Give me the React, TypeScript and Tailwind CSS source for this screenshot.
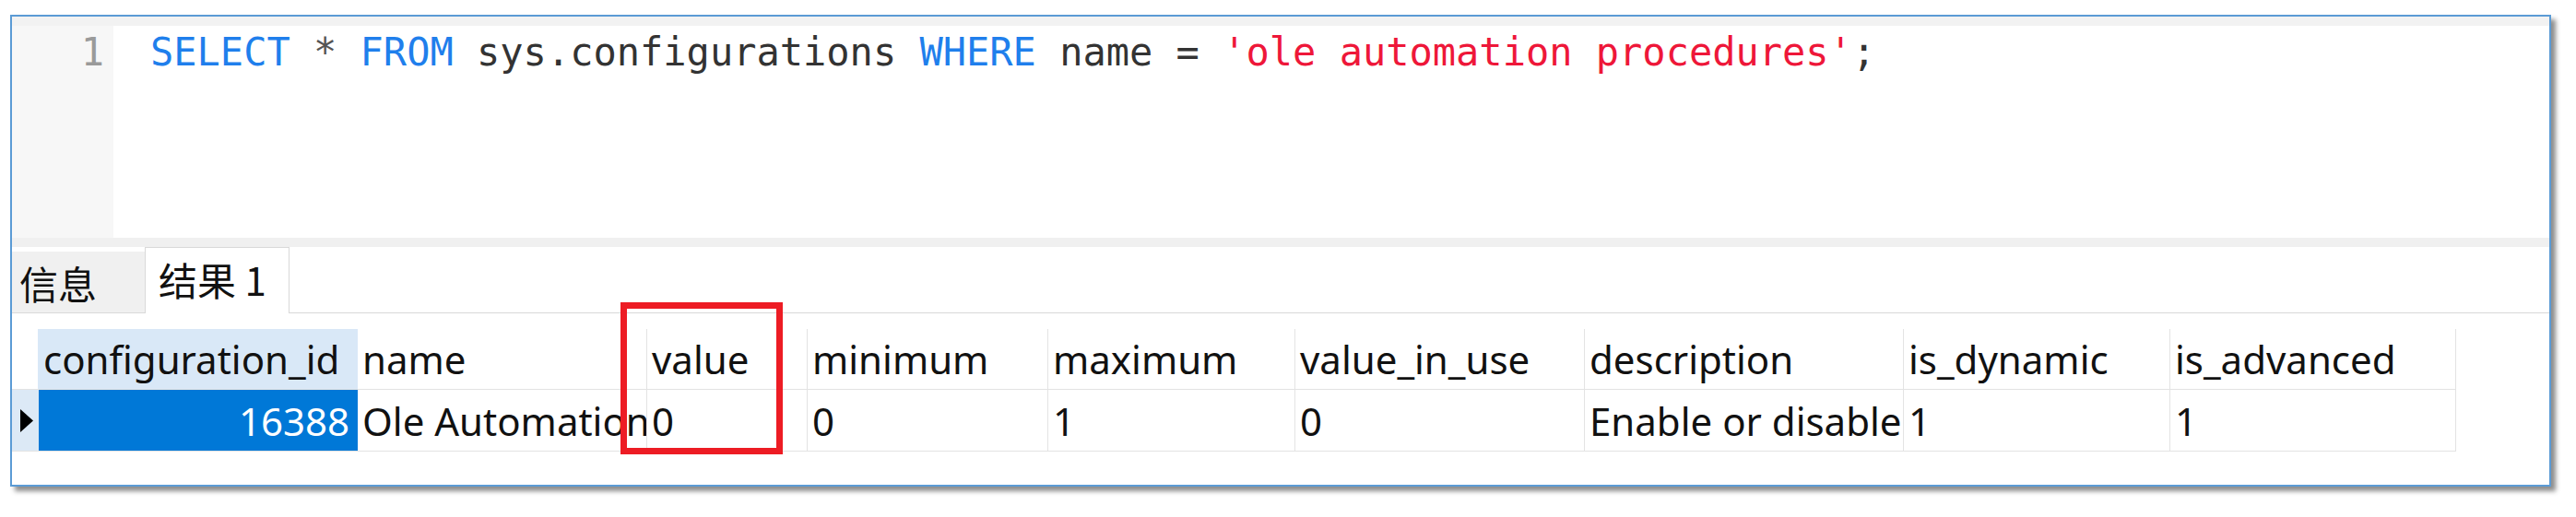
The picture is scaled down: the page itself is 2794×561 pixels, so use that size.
import React from "react";

const cols = [
  { w: "w-[347px]", label: "configuration_id", value: "16388" },
  { w: "w-[314px]", label: "name", value: "Ole Automation Procedures" },
  { w: "w-[174px]", label: "value", value: "0" },
  { w: "w-[261px]", label: "minimum", value: "0" },
  { w: "w-[268px]", label: "maximum", value: "1" },
  { w: "w-[314px]", label: "value_in_use", value: "0" },
  { w: "w-[346px]", label: "description", value: "Enable or disable Ole Automation Procedures" },
  { w: "w-[289px]", label: "is_dynamic", value: "1" },
  { w: "w-[310px]", label: "is_advanced", value: "1" },
];

const tableFont = { fontFamily: '"Noto Sans", "Open Sans", sans-serif' } as React.CSSProperties;

export default function App() {
  return (
    <div className="relative w-[2794px] h-[561px] bg-white pt-[16px] pl-[11px]">
      <div className="w-[2756px] h-[512px] border-2 border-[#5b9bd5] bg-white shadow-[5px_5px_5px_rgba(0,0,0,0.45)] flex flex-col">
        {/* top band */}
        <div className="h-[10px] bg-[#f2f2f2] shrink-0" />
        {/* editor */}
        <div className="h-[230px] flex shrink-0">
          <div
            className="w-[110px] bg-[#f7f7f7] text-right pr-[10px] pt-[4px] text-[42px] leading-[50px] text-[#9a9a9a]"
            style={{ fontFamily: '"DejaVu Sans Mono", "Liberation Mono", monospace' }}
          >
            1
          </div>
          <div
            className="flex-1 pl-[40px] pt-[4px] text-[42px] leading-[50px] text-[#333] whitespace-pre"
            style={{ fontFamily: '"DejaVu Sans Mono", "Liberation Mono", monospace' }}
          >
            <span className="text-[#1f7fec]">SELECT</span>
            <span className="text-[#555]"> * </span>
            <span className="text-[#1f7fec]">FROM</span>
            <span> sys.configurations </span>
            <span className="text-[#1f7fec]">WHERE</span>
            <span> name = </span>
            <span className="text-[#ee1739]">'ole automation procedures'</span>
            <span>;</span>
          </div>
        </div>
        {/* separator band */}
        <div className="h-[10px] bg-[#f0f0f0] shrink-0" />
        {/* tabs */}
        <div
          className="h-[72px] flex items-end shrink-0"
          style={{ fontFamily: '"Noto Sans", "Noto Sans CJK SC", sans-serif' }}
        >
          <div className="w-[144px] h-[67px] bg-[#f0f0f0] border-b border-[#d9d9d9] flex items-center pl-[8px] text-[42px] text-[#111]">
            <span style={{ fontFamily: '"Noto Sans CJK SC", sans-serif' }}>信息</span>
          </div>
          <div className="w-[157px] h-[72px] bg-white border-x border-t border-[#d9d9d9] flex items-center pl-[14px] pb-[4px] text-[42px] text-[#111]">
            <span style={{ fontFamily: '"Noto Sans CJK SC", sans-serif' }}>结果 1</span>
          </div>
          <div className="flex-1 h-[72px] border-b border-[#d9d9d9]" />
        </div>
        {/* grid */}
        <div className="pt-[17px]" style={tableFont}>
          {/* header row */}
          <div className="flex h-[66px] text-[42px] text-[#111]">
            <div className="w-[28px] shrink-0 border-b border-[#e3e3e3]" />
            {cols.map((c, i) => (
              <div
                key={c.label}
                className={`${c.w} shrink-0 flex items-center px-[5px] overflow-hidden whitespace-nowrap border-b border-[#e3e3e3] ${
                  i === 0 ? "bg-[#d9e8f7] pl-[6px]" : "border-r border-[#e3e3e3]"
                }`}
              >
                {c.label}
              </div>
            ))}
          </div>
          {/* data row */}
          <div className="flex h-[67px] text-[42px] text-[#111]">
            <div className="w-[29px] shrink-0 bg-[#dce9f6] border-b border-[#e3e3e3] flex items-center pl-[9px]">
              <svg width="14" height="25" viewBox="0 0 14 25">
                <polygon points="0,0 14,12.5 0,25" fill="#000" />
              </svg>
            </div>
            {cols.map((c, i) => (
              <div
                key={c.label}
                className={`${i === 0 ? "w-[346px]" : c.w} shrink-0 flex items-center overflow-hidden whitespace-nowrap border-b border-[#e3e3e3] ${
                  i === 0
                    ? "bg-[#0078d7] text-white justify-end pr-[9px]"
                    : "border-r border-[#e3e3e3] px-[5px]"
                }`}
              >
                {c.value}
              </div>
            ))}
          </div>
        </div>
      </div>
      {/* red highlight box */}
      <div className="absolute left-[673px] top-[328px] w-[176px] h-[165px] border-[7px] border-[#ed1c24]" />
    </div>
  );
}
